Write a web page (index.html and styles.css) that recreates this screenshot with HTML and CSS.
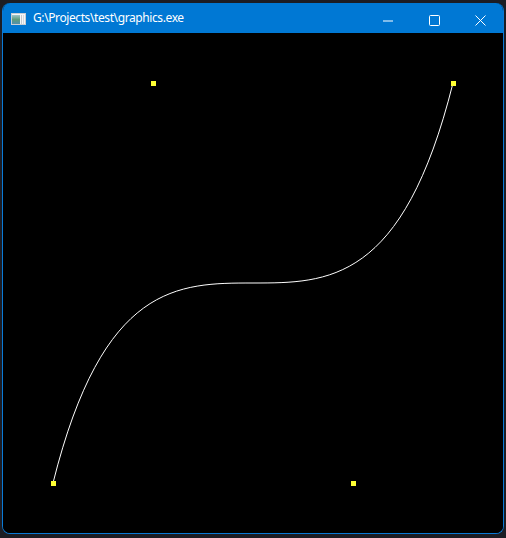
FILE: index.html
```html
<!DOCTYPE html>
<html>
<head>
<meta charset="utf-8">
<link rel="stylesheet" href="styles.css">
</head>
<body>
<div class="window">
  <div class="titlebar">
    <svg class="app-icon" width="15" height="12" viewBox="0 0 15 12">
      <defs>
        <linearGradient id="g" x1="0" y1="0" x2="0" y2="1">
          <stop offset="0" stop-color="#9fc4c9"/>
          <stop offset="0.5" stop-color="#5f9c7c"/>
          <stop offset="1" stop-color="#4f8fb0"/>
        </linearGradient>
      </defs>
      <rect x="0" y="0" width="15" height="12" fill="#c9cdd2"/>
      <rect x="1" y="1" width="13" height="10" fill="#f4f6f8"/>
      <rect x="1" y="2" width="8" height="9" fill="url(#g)"/>
      <rect x="10" y="2" width="1" height="9" fill="#c4c8cc"/>
      <rect x="12" y="2" width="1" height="9" fill="#d6d9dc"/>
    </svg>
    <span class="title">G:\Projects\test\graphics.exe</span>
    <div class="caption-buttons">
      <div class="cbtn">
        <svg width="10" height="10" viewBox="0 0 10 10"><rect x="0" y="4.5" width="10" height="1" fill="#fff"/></svg>
      </div>
      <div class="cbtn">
        <svg width="11" height="11" viewBox="0 0 11 11"><rect x="0.5" y="0.5" width="10" height="10" rx="1" fill="none" stroke="#fff" stroke-width="1"/></svg>
      </div>
      <div class="cbtn">
        <svg width="11" height="11" viewBox="0 0 11 11"><path d="M0.5 0.5 L10.5 10.5 M10.5 0.5 L0.5 10.5" stroke="#fff" stroke-width="1" fill="none"/></svg>
      </div>
    </div>
  </div>
  <div class="canvas">
    <svg width="500" height="500" viewBox="0 0 500 500">
      <path d="M50 450 C150 50 350 450 450 50" stroke="#fff" stroke-width="1" fill="none"/>
      <rect x="148" y="48" width="5" height="5" fill="#ffff33"/>
      <rect x="448" y="48" width="5" height="5" fill="#ffff33"/>
      <rect x="48" y="448" width="5" height="5" fill="#ffff33"/>
      <rect x="348" y="448" width="5" height="5" fill="#ffff33"/>
    </svg>
  </div>
</div>
</body>
</html>
```
FILE: styles.css
```css
html, body {
  margin: 0;
  padding: 0;
  background: #1c1d24;
  width: 506px;
  height: 538px;
  overflow: hidden;
}
.window {
  margin: 3px 0 0 2px;
  width: 502px;
  height: 531px;
  border: 1px solid #0a7ad6;
  border-top: none;
  border-radius: 8px;
  background: #000;
  overflow: hidden;
  display: flex;
  flex-direction: column;
  box-sizing: border-box;
}
.titlebar {
  height: 30px;
  flex: none;
  background: #0078d4;
  display: flex;
  align-items: center;
  color: #fff;
  font-family: "Noto Sans", "Open Sans", sans-serif;
  font-size: 12px;
  letter-spacing: -0.4px;
}
.app-icon {
  margin-left: 8px;
  margin-top: 1px;
  flex: none;
}
.title {
  margin-left: 7px;
  margin-top: -1px;
  white-space: nowrap;
}
.caption-buttons {
  margin-left: auto;
  display: flex;
  height: 30px;
}
.cbtn {
  width: 46px;
  height: 30px;
  display: flex;
  align-items: center;
  justify-content: center;
}
.cbtn svg {
  display: block;
  margin-top: 5px;
}
.canvas {
  width: 500px;
  height: 500px;
  background: #000;
}
.canvas svg {
  display: block;
}
```
